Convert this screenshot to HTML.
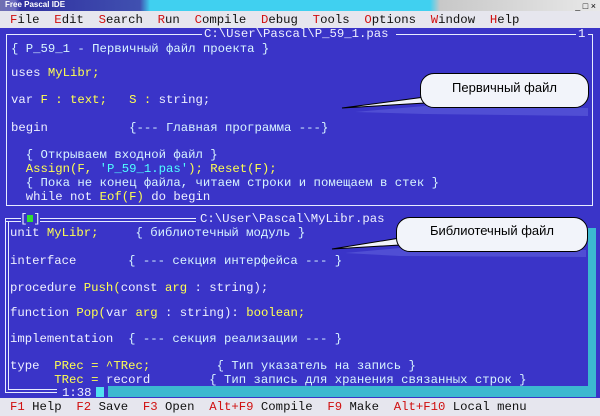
<!DOCTYPE html>
<html><head><meta charset="utf-8">
<style>
body{margin:0;width:600px;height:416px;overflow:hidden;background:#3a34c8;font-family:"Liberation Mono","DejaVu Sans Mono",monospace;position:relative}
.t{position:absolute;white-space:pre;font-size:12.3px;line-height:14px;color:#eef0ff}
.y{color:#ffff50}.c{color:#d8f4ff}.s{color:#50ffff}.r{color:#d01010}.k{color:#101010}
#title{position:absolute;left:0;top:0;width:600px;height:11px;background:linear-gradient(90deg,#7070b0 0,#6a6ac0 15px,#3030a0 20px,#4050b0 140px,#40d0f0 150px,#40d0f0 430px,#c8c8c8 440px,#e8e8e8 600px)}
#menu{position:absolute;left:0;top:11px;width:600px;height:17px;background:#e6e6ee}
#status{position:absolute;left:0;top:398px;width:600px;height:18px;background:#e6e6ee}
.ln{position:absolute;background:#e8ecff}
.bub{position:absolute;background:#f2f4fa;border:1px solid #000;border-radius:14px;font-family:"Liberation Sans",sans-serif;font-size:13px;color:#000;text-align:center}
</style></head><body>
<div id="title"><span style="position:absolute;left:5px;top:0;font:bold 8px 'Liberation Sans',sans-serif;color:#fff">Free Pascal IDE</span>
<span style="position:absolute;right:4px;top:1px;font:9px 'Liberation Sans',sans-serif;color:#000">_ □ ×</span></div>
<div id="menu"></div>
<div class="t k" style="left:10px;top:13px"><span class="r">F</span>ile  <span class="r">E</span>dit  <span class="r">S</span>earch  <span class="r">R</span>un  <span class="r">C</span>ompile  <span class="r">D</span>ebug  <span class="r">T</span>ools  <span class="r">O</span>ptions  <span class="r">W</span>indow  <span class="r">H</span>elp</div>

<div class="ln" style="left:6px;top:34px;width:196px;height:1px"></div>
<div class="ln" style="left:396px;top:34px;width:180px;height:1px"></div>
<div class="ln" style="left:588px;top:34px;width:5px;height:1px"></div>
<div class="ln" style="left:6px;top:34px;width:1px;height:172px"></div>
<div class="ln" style="left:592px;top:34px;width:1px;height:172px"></div>
<div class="ln" style="left:6px;top:205px;width:587px;height:1px"></div>
<div class="t" style="left:204px;top:27px">C:\User\Pascal\P_59_1.pas</div>
<div class="t" style="left:578px;top:27px">1</div>

<div class="t" style="left:11px;top:42px"><span class="c">{ P_59_1 - Первичный файл проекта }</span></div>
<div class="t" style="left:11px;top:66px">uses <span class="y">MyLibr;</span></div>
<div class="t" style="left:11px;top:93px">var <span class="y">F : text;   S : </span>string;</div>
<div class="t" style="left:11px;top:121px">begin           <span class="c">{--- Главная программа ---}</span></div>
<div class="t" style="left:11px;top:148px">  <span class="c">{ Открываем входной файл }</span></div>
<div class="t" style="left:11px;top:162px">  <span class="y">Assign(F, <span class="s">'P_59_1.pas'</span>); Reset(F);</span></div>
<div class="t" style="left:11px;top:176px">  <span class="c">{ Пока не конец файла, читаем строки и помещаем в стек }</span></div>
<div class="t" style="left:11px;top:190px">  while not <span class="y">Eof(F)</span> do begin</div>

<div class="ln" style="left:5px;top:218px;width:16px;height:1px"></div>
<div class="ln" style="left:5px;top:221px;width:16px;height:1px"></div>
<div class="ln" style="left:40px;top:218px;width:156px;height:1px"></div>
<div class="ln" style="left:40px;top:221px;width:156px;height:1px"></div>
<div class="ln" style="left:5px;top:218px;width:1px;height:175px"></div>
<div class="ln" style="left:8px;top:221px;width:1px;height:169px"></div>
<div class="ln" style="left:5px;top:392px;width:52px;height:1px"></div>
<div class="ln" style="left:8px;top:389px;width:49px;height:1px"></div>
<div class="t" style="left:20px;top:212px">[<span style="display:inline-block;width:6px;height:7px;background:#30e030"></span>]</div>
<div class="t" style="left:200px;top:212px">C:\User\Pascal\MyLibr.pas</div>
<div style="position:absolute;left:588px;top:228px;width:8px;height:164px;background:#3cb8d0"></div>
<div style="position:absolute;left:108px;top:386px;width:488px;height:11px;background:#3cb8d0"></div>
<div style="position:absolute;left:96px;top:387px;width:8px;height:10px;background:#50e0f0"></div>
<div class="t" style="left:62px;top:386px">1:38</div>

<div class="t" style="left:10px;top:226px">unit <span class="y">MyLibr;</span>     <span class="c">{ библиотечный модуль }</span></div>
<div class="t" style="left:10px;top:254px">interface       <span class="c">{ --- секция интерфейса --- }</span></div>
<div class="t" style="left:10px;top:281px">procedure <span class="y">Push(</span>const <span class="y">arg</span> : string);</div>
<div class="t" style="left:10px;top:306px">function <span class="y">Pop(</span>var <span class="y">arg</span> : string): <span class="y">boolean;</span></div>
<div class="t" style="left:10px;top:332px">implementation  <span class="c">{ --- секция реализации --- }</span></div>
<div class="t" style="left:10px;top:359px">type  <span class="y">PRec = ^TRec;</span>         <span class="c">{ Тип указатель на запись }</span></div>
<div class="t" style="left:10px;top:373px">      <span class="y">TRec = </span>record        <span class="c">{ Тип запись для хранения связанных строк }</span></div>

<svg style="position:absolute;left:0;top:0" width="600" height="416">
<path d="M355,112 L425,106 L588,108 L588,116 L425,114 Z" fill="#5a5ad8" opacity="0.7"/>
<path d="M345,253 L400,248 L586,250 L586,257 L400,256 Z" fill="#5a5ad8" opacity="0.7"/>
<polygon points="342,108 425,97 425,103" fill="#f2f4fa" stroke="#000"/>
<polygon points="332,249 400,238 400,245" fill="#f2f4fa" stroke="#000"/>
</svg>
<div class="bub" style="left:420px;top:73px;width:167px;height:33px;line-height:28px">Первичный файл</div>
<div class="bub" style="left:396px;top:217px;width:190px;height:33px;line-height:26px">Библиотечный файл</div>

<div id="status"></div>
<div class="t k" style="left:10px;top:400px"><span class="r">F1</span> Help  <span class="r">F2</span> Save  <span class="r">F3</span> Open  <span class="r">Alt+F9</span> Compile  <span class="r">F9</span> Make  <span class="r">Alt+F10</span> Local menu</div>
</body></html>
